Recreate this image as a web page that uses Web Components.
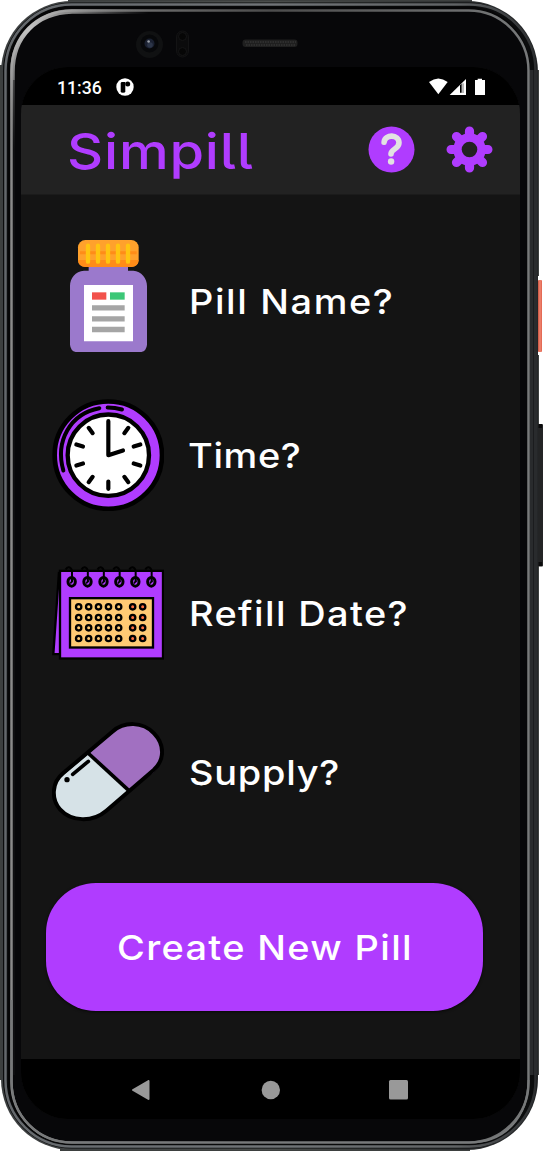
<!DOCTYPE html>
<html lang="en">
<head>
<meta charset="utf-8">
<title>Simpill</title>
<style>
  html, body { margin: 0; background: #fff; }
  body { font-family: Inter, "Open Sans", sans-serif; overflow: hidden; }
</style>
</head>
<body>
<phone-frame>
  <status-bar>11:36</status-bar>
  <app-header>Simpill</app-header>
  <pill-list>
    <pill-row label="Pill Name?" fit="205.5" drop="5.5"><bottle-icon></bottle-icon></pill-row>
    <pill-row label="Time?" fit="113.5" drop="1.2" shift="-0.5"><clock-icon></clock-icon></pill-row>
    <pill-row label="Refill Date?" fit="220" drop="0.2"><calendar-icon></calendar-icon></pill-row>
    <pill-row label="Supply?" fit="151" drop="1"><capsule-icon></capsule-icon></pill-row>
  </pill-list>
  <create-button></create-button>
  <nav-bar></nav-bar>
</phone-frame>
<script>
function define(name, html, setup) {
  customElements.define(name, class extends HTMLElement {
    constructor() {
      super();
      this.attachShadow({ mode: 'open' }).innerHTML = html;
    }
    connectedCallback() { if (setup) setup(this, this.shadowRoot); }
  });
}

// Sets its text in slightly widened letters, spaced out to the given width.
define('fit-text', `
  <style>
    :host { display: block; white-space: nowrap; text-align: left; }
    span { display: inline-block; transform-origin: 0 50%; }
  </style>
  <span></span>`, (host, root) => {
    const stretch = Number(host.getAttribute('stretch') || 1.1);
    const width = Number(host.getAttribute('width'));
    const span = root.querySelector('span');
    const text = host.getAttribute('text');
    span.textContent = text;
    span.style.letterSpacing = '0.001px';
    const natural = span.getBoundingClientRect().width;
    span.style.letterSpacing = ((width / stretch - natural) / text.length) + 'px';
    span.style.transform = `scaleX(${stretch})`;
    host.style.width = width + 'px';
  });

define('phone-frame', `
  <style>
    :host { display: block; position: relative; width: 543px; height: 1152px; box-sizing: border-box; padding: 67px 23px 33px 21px; }
    .shell { position: absolute; inset: 0; display: block; }
    .screen { position: relative; display: flex; flex-direction: column; width: 499px; height: 1052px; background: #141414; border-radius: 47px; overflow: hidden; }
  </style>
  <svg class="shell" width="543" height="1152" viewBox="0 0 543 1152" fill="none">
    <defs>
      <linearGradient id="edge" x1="0" y1="0" x2="1" y2="0">
        <stop offset="0" stop-color="#3c3f40"/><stop offset=".5" stop-color="#4a4d4b"/><stop offset="1" stop-color="#242628"/>
      </linearGradient>
      <linearGradient id="ring" x1="0" y1="0" x2="1" y2="0">
        <stop offset="0" stop-color="#64686c"/><stop offset=".5" stop-color="#707477"/><stop offset=".85" stop-color="#606365"/><stop offset="1" stop-color="#2b2d2f"/>
      </linearGradient>
      <linearGradient id="inner" x1="0" y1="0" x2="1" y2="0">
        <stop offset="0" stop-color="#8a8a8a"/><stop offset=".5" stop-color="#4c4c4c"/><stop offset="1" stop-color="#77797a"/>
      </linearGradient>
      <radialGradient id="shine" gradientUnits="userSpaceOnUse" cx="30" cy="30" r="120">
        <stop offset="0" stop-color="#c4c4c4"/><stop offset=".4" stop-color="#a0a0a0" stop-opacity=".8"/><stop offset="1" stop-color="#777" stop-opacity="0"/>
      </radialGradient>
      <linearGradient id="power" x1="0" y1="0" x2="1" y2="0">
        <stop offset="0" stop-color="#c9513d"/><stop offset=".5" stop-color="#f08873"/><stop offset="1" stop-color="#e0614c"/>
      </linearGradient>
    </defs>
    <path d="M68 0H472V2H68ZM0 65H2V1080H0ZM537 70H539V276H537ZM537 355H539V1075H537ZM60 1149H470V1151H60Z" fill="#3d403f"/>
    <rect x="538" y="280" width="4" height="72" rx="1" fill="url(#power)"/>
    <rect x="538" y="424" width="5" height="142.500" rx="1" fill="#232425"/>
    <path d="M538.500 424H542V428H538.500ZM538.500 562H542V566H538.500Z" fill="#0b0b0c"/>
    <rect x="1" y="1" width="537" height="1149" rx="71" fill="url(#edge)"/>
    <rect x="3" y="2.500" width="534" height="1146" rx="69" fill="#0b0c0d"/>
    <rect x="5.500" y="4.500" width="530" height="1142" rx="66" stroke="url(#ring)" stroke-width="2.500"/>
    <rect x="530" y="70" width="7" height="1005" fill="#292b2d"/>
    <path d="M533.500 70V1075" stroke="#1b1c1e"/>
    <rect x="8" y="6.500" width="522" height="1138" rx="63" fill="#060607"/>
    <rect x="11.500" y="10.500" width="517" height="1132" rx="60" fill="#070709" stroke="url(#inner)" stroke-width="2.500"/>
    <path d="M12.500 150V72C12.500 36 37 12.500 72 11.500H160" stroke="url(#shine)" stroke-width="4.500"/>
    <path d="M11.500 1000V1080C12 1117 37 1142 73 1142.500H470C505 1142 528 1118 528.500 1080" stroke="#77797a" stroke-width="2"/>
    <path d="M14 80V1075" stroke="#171719"/>
    <circle cx="149.500" cy="44.500" r="13.500" fill="#101112"/>
    <circle cx="149.500" cy="43.500" r="9" fill="#07080a"/>
    <circle cx="149.500" cy="43.500" r="5" fill="#1a2030"/>
    <circle cx="150" cy="45" r="2.800" fill="#2c3548"/>
    <circle cx="148.600" cy="41.500" r="1.300" fill="#9a9fa8"/>
    <rect x="176.500" y="31" width="12" height="26" rx="6" fill="#0b0b0c" stroke="#131314"/>
    <circle cx="182.500" cy="36.500" r="4" fill="#060606" stroke="#151516"/>
    <circle cx="182.500" cy="51.500" r="4" fill="#060606" stroke="#151516"/>
    <rect x="242.500" y="39.500" width="55" height="7.500" rx="3" fill="#1f1f1f"/>
    <path d="M245 42H296M246 45H295" stroke="#343434" stroke-width="1.500" stroke-dasharray="1.500 1"/>
  </svg>
  <div class="screen"><slot></slot></div>`);

define('status-bar', `
  <style>
    :host { display: flex; flex: none; height: 38px; box-sizing: border-box; background: #000; color: #fff; align-items: center; padding: 2.500px 35px 0 36px; font: 500 17.700px/20px Roboto, sans-serif; }
    .time { width: 58.500px; padding-top: 1px; }
    svg { display: block; }
    .system { margin-left: auto; }
  </style>
  <span class="time"><slot></slot></span>
  <svg width="19" height="19" viewBox="0 0 19 19"><circle cx="9" cy="9" r="8.700" fill="#fff"/><path d="M4.700 5.400Q4.700 4 6.100 4H9.300V13.500Q9.300 14.700 7 14.700T4.700 13.500Z" fill="#000"/><circle cx="11.700" cy="6" r="2.500" fill="#000"/></svg>
  <svg class="system" width="56" height="18" viewBox="474 234 168 54">
    <path d="M474 246Q502 225 530 246L502 283Z" fill="#fff"/>
    <path d="M536 285L585 237V285Z" fill="#fff"/><path d="M567 256L572 251V278H567Z" fill="#000"/><path d="M576 250V279" stroke="#777" stroke-width="3"/>
    <path d="M612 240H620V236H633V240H642V285H612Z" fill="#fff"/>
  </svg>`);

define('app-header', `
  <style>
    :host { display: flex; flex: none; height: 89.500px; box-sizing: border-box; background: #222; border-bottom: 1px solid #1b1b1b; align-items: center; padding: 0 27px 0 45.500px; color: #b03cff; }
    fit-text { font: 500 50px/60px Inter, sans-serif; font-feature-settings: "cv05"; margin-top: 3.500px; }
    svg { display: block; }
    .help { margin-left: auto; margin-right: 31px; }
  </style>
  <fit-text text="Simpill" width="186.5" stretch="1.12"></fit-text>
  <svg class="help" width="47" height="47" viewBox="-23.500 -23.500 47 47"><circle r="23" fill="#b03cff"/><path d="M-7.400-7.300C-6.500-15.500 7.400-15.500 7.500-6.700C7.600-.3-.5-.8-.5 4.500" fill="none" stroke="#e2e2e2" stroke-width="5.600" stroke-linecap="round"/><circle cx="-.4" cy="12" r="3.200" fill="#e2e2e2"/></svg>
  <svg width="47" height="47" viewBox="-23.500 -23.500 47 47"><path d="M0-18.400V18.400M-18.400 0H18.400M-13-13L13 13M-13 13L13-13" stroke="#b03cff" stroke-width="9.200" stroke-linecap="round"/><circle r="16.200" fill="#b03cff"/><circle r="7.800" fill="#222"/></svg>`);

define('pill-list', `
  <style>
    :host { display: grid; grid-template-rows: repeat(4, 158.670px); flex: none; margin-top: 22.200px; padding-left: 31px; }
  </style>
  <slot></slot>`);

define('pill-row', `
  <style>
    :host { display: grid; grid-template-columns: 112px auto; column-gap: 24.500px; align-items: center; justify-content: start; color: #fff; }
    .label { font: 500 34.500px/42px Inter, sans-serif; }
  </style>
  <slot></slot><div class="label"></div>`, (host, root) => {
    const label = root.querySelector('.label');
    label.style.paddingTop = Number(host.getAttribute('drop')) * 2 + 'px';
    label.style.marginLeft = (host.getAttribute('shift') || 0) + 'px';
    const text = document.createElement('fit-text');
    text.setAttribute('text', host.getAttribute('label'));
    text.setAttribute('width', host.getAttribute('fit'));
    label.replaceChildren(text);
  });

const iconStyle = '<style>:host{display:block;width:112px;height:112px}svg{display:block}</style>';

define('bottle-icon', iconStyle + `
  <svg width="112" height="112" viewBox="36 30 336 336">
    <path d="M146 105H264V122H280C304 124 321 145 321 168V344Q319 366 297 367H114Q92 366 90 344V168C90 145 106 124 132 122H146Z" fill="#9b79cc"/>
    <rect x="114" y="30" width="182" height="81" rx="22" fill="#ffa12c"/>
    <path d="M114 90H296Q295 111 274 111H136Q115 111 114 90Z" fill="#ff8c18"/>
    <path d="M120 68H290" stroke="#ff8c18" stroke-width="9"/>
    <path d="M144 47V95M174 47V95M204 47V95M234 47V95M264 47V95" stroke="#ffc510" stroke-width="13" stroke-linecap="round"/>
    <path d="M132 165H279V334H132Z" fill="#fff"/>
    <path d="M156 187H199V209H156Z" fill="#f2524b"/><path d="M210 187H254V209H210Z" fill="#3cc777"/>
    <path d="M156 233.500H254M156 266.500H254M156 298.500H254" stroke="#a5a5a5" stroke-width="16"/>
  </svg>`);

define('clock-icon', iconStyle + `
  <svg width="112" height="112" viewBox="36 25.500 336 336">
    <g fill="none" stroke="#000" stroke-linecap="round">
      <circle cx="205" cy="194" r="161" fill="#b03cff" stroke-width="14"/>
      <circle cx="205" cy="194" r="122" fill="#fff" stroke-width="13"/>
      <path d="M70 240C45 151 91 69 178 53M203 51Q225 51 246 57" stroke-width="12"/>
      <path d="M205 92V194L249 180" stroke-width="12.500" stroke-linejoin="round"/>
      <path d="M205 273V295M146 112L158 128M265 112L253 128M109 162L129 168M301 162L281 168M109 225L129 219M301 225L281 219M146 275L158 259M265 275L253 259" stroke-width="12.500"/>
    </g>
  </svg>`);

const cells = [157, 189, 220, 252].map(y =>
  [116, 146, 175.5, 205.5, 236, 278, 308].map((x, i) =>
    `<circle cx="${x}" cy="${y}" r="8" fill="${i > 4 ? '#ff7040' : '#ffca74'}" stroke="#000" stroke-width="7"/>`).join('')).join('');
const rings = [95, 142.5, 190.5, 238, 286, 334].map(x =>
  `<path d="M${x - 18} 45Q${x - 14} 37 ${x - 8} 38Q${x + 1} 40 ${x + 1} 53V83" stroke-width="6"/><ellipse cx="${x}" cy="82" rx="11" ry="13" stroke-width="9"/><path d="M${x - 4} 87L${x + 3} 78" stroke-width="5"/>`).join('');

define('calendar-icon', iconStyle + `
  <svg width="112" height="112" viewBox="36 7.500 336 336">
    <g fill="none" stroke="#000" stroke-width="7">
      <path d="M57 52L40 299H62" fill="#b03cff"/>
      <rect x="60" y="49" width="309" height="263" fill="#b03cff"/>
      <rect x="90" y="131" width="249" height="148" fill="#ffca74"/>
      ${rings}${cells}
    </g>
  </svg>`);

define('capsule-icon', iconStyle + `
  <svg width="112" height="112" viewBox="36 18 336 336">
    <path d="M146 131L217 68C252 36 304 34 340 69C374 106 375 156 340 188L265 239Z" fill="#a170c1"/>
    <path d="M146 131L74 192C38 222 32 264 60 299C92 337 155 338 197 303L265 241Z" fill="#d6e2e7"/>
    <path d="M217 65L69 190C35 218 33 267 60 298C94 336 158 337 199 302L341 180C375 149 374 103 342 70C308 34 253 34 217 65Z" fill="none" stroke="#000" stroke-width="12"/>
    <path d="M144 129L266 241" stroke="#000" stroke-width="11"/>
    <path d="M98 193L145 154" stroke="#000" stroke-width="11" stroke-linecap="round"/><circle cx="81" cy="209" r="8"/>
  </svg>`);

define('create-button', `
  <style>
    :host { display: block; flex: none; margin: 31.500px 37px 0 25px; }
    button { display: flex; align-items: center; justify-content: center; width: 437px; height: 128.500px; margin: 0; padding: 2px 0 0 0; border: 0; border-radius: 50px; background: #b03cff; color: #fff; font: 500 34.500px/42px Inter, sans-serif; box-shadow: 0 1px 3px #000a; }
  </style>
  <button><fit-text text="Create New Pill" width="296"></fit-text></button>`);

define('nav-bar', `
  <style>
    :host { display: grid; flex: none; grid-template-columns: 20px 20px 20px; column-gap: 108.500px; justify-content: start; align-items: center; height: 60px; box-sizing: border-box; margin-top: auto; padding: 1px 0 0 110px; background: #000; }
    svg { display: block; }
  </style>
  <svg width="20" height="20" viewBox="0 0 20 20"><path d="M2 10L17.500 1V19Z" fill="#999" stroke="#999" stroke-width="2" stroke-linejoin="round"/></svg>
  <svg width="20" height="20" viewBox="0 0 20 20"><circle cx="10.800" cy="10" r="9.200" fill="#999"/></svg>
  <svg width="20" height="20" viewBox="0 0 20 20"><rect x="1" y="0" width="19" height="19.500" rx="1.500" fill="#999"/></svg>`);
</script>
</body>
</html>
